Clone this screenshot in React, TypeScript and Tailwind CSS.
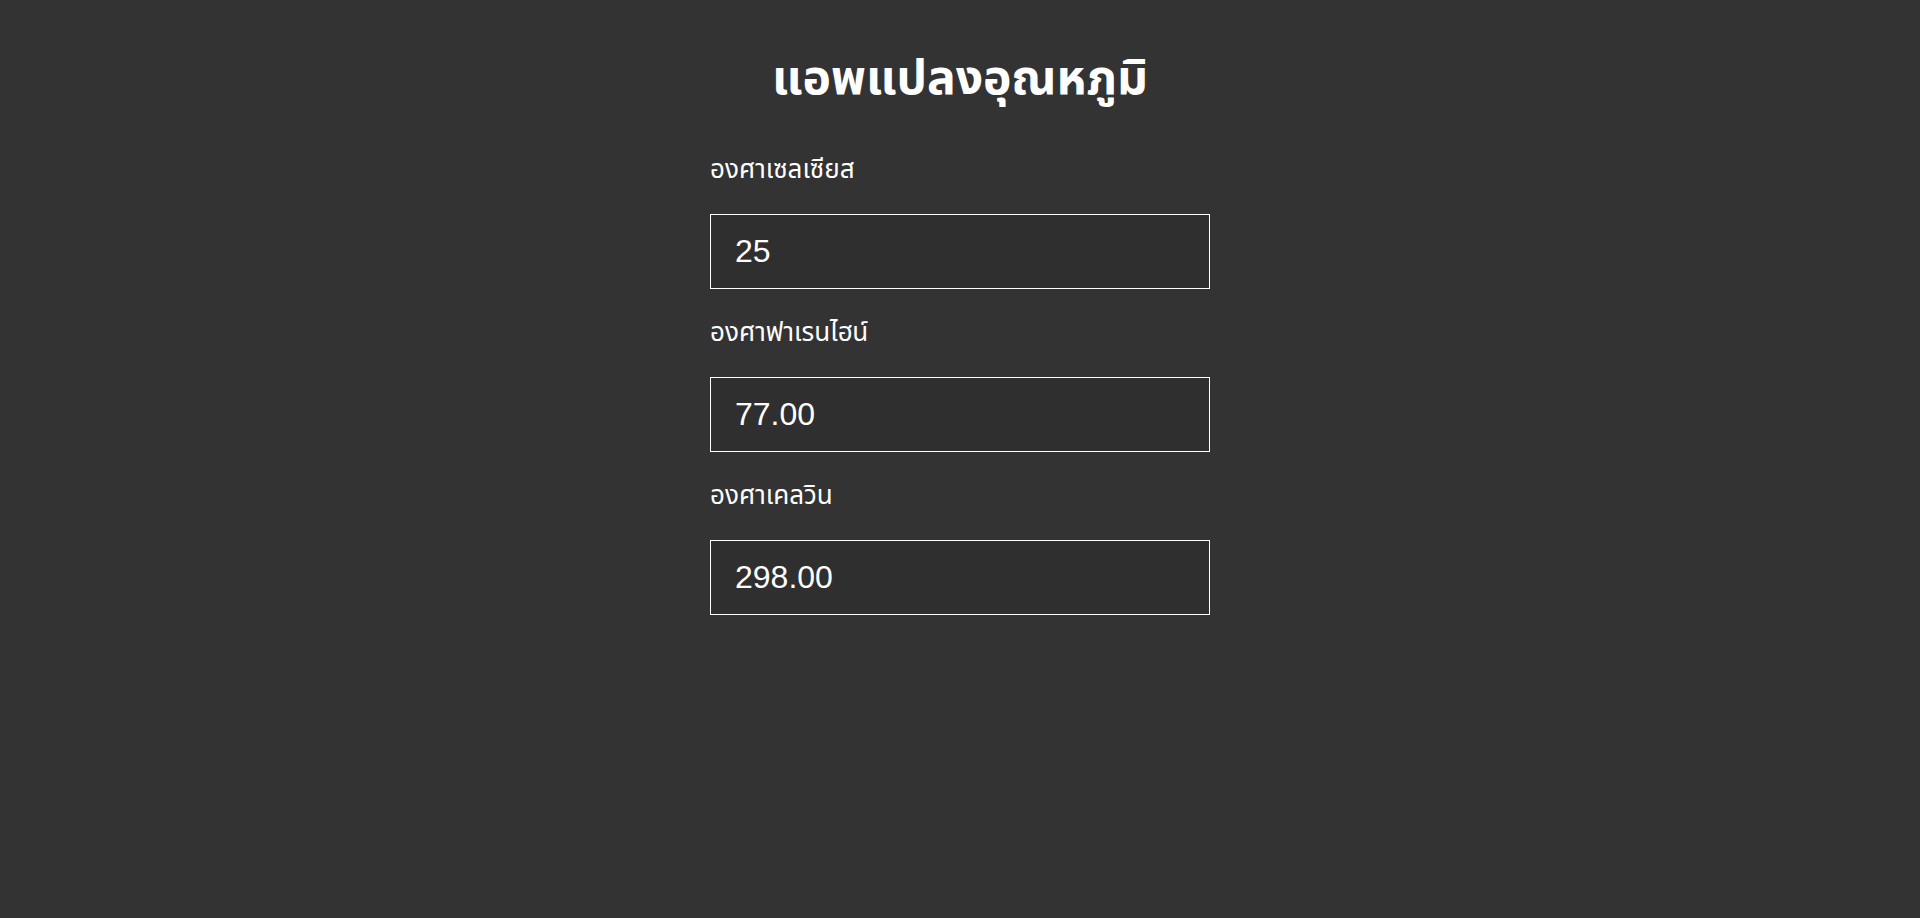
import { useState } from 'react';

export default function App() {
  const [celsius, setCelsius] = useState('25')

  const c = parseFloat(celsius)
  const fahrenheit = isNaN(c) ? '' : (c * 9 / 5 + 32).toFixed(2)
  const kelvin = isNaN(c) ? '' : (c + 273).toFixed(2)

  const inputClass = "block w-full h-[75px] px-6 bg-[#2f2f2f] border border-white text-white text-[32px] outline-none"

  return (
    <div className="min-h-screen bg-[#333333] text-white" style={{ fontFamily: '"Liberation Sans", "Noto Sans Thai", "Noto Sans Thai UI", "Noto Sans", sans-serif' }}>
      <div className="w-[500px] mx-auto pt-[48px]">
        <h1 className="text-center text-[48px] font-bold leading-tight">แอพแปลงอุณหภูมิ</h1>
        <div className="mt-[46px] flex flex-col">
          <label className="text-[26px] leading-[30px]">องศาเซลเซียส</label>
          <input className={inputClass + " mt-[30px]"} value={celsius} onChange={(e) => setCelsius(e.target.value)} />
          <label className="text-[26px] leading-[30px] mt-[28px]">องศาฟาเรนไฮน์</label>
          <input className={inputClass + " mt-[30px]"} value={fahrenheit} readOnly />
          <label className="text-[26px] leading-[30px] mt-[28px]">องศาเคลวิน</label>
          <input className={inputClass + " mt-[30px]"} value={kelvin} readOnly />
        </div>
      </div>
    </div>
  );
}
